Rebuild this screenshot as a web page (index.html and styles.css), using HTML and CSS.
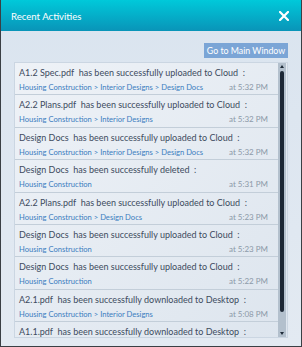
FILE: index.html
```html
<!DOCTYPE html>
<html lang="en">
<head>
    <meta charset="UTF-8">
    <title>Recent Activities</title>
    <link rel="stylesheet" href="styles.css">
</head>
<body>
    <div class="window">
        <div class="header">
            <span class="title">Recent Activities</span>
            <svg class="close" width="10" height="10" viewBox="0 0 10 10">
                <path d="M1 1 L9 9 M9 1 L1 9" stroke="#fff" stroke-width="2.2" stroke-linecap="square"/>
            </svg>
        </div>
        <div class="content">
            <div class="toolbar">
                <button class="main-btn">Go to Main Window</button>
            </div>
            <div class="list-box">
                <div class="list">
                    <div class="item">
                        <div class="msg">A1.2 Spec.pdf&nbsp; has been successfully uploaded to Cloud &nbsp;:</div>
                        <div class="meta"><span class="path">Housing Construction &gt; Interior Designs &gt; Design Docs</span><span class="time">at 5:32 PM</span></div>
                    </div>
                    <div class="item">
                        <div class="msg">A2.2 Plans.pdf&nbsp; has been successfully uploaded to Cloud &nbsp;:</div>
                        <div class="meta"><span class="path">Housing Construction &gt; Interior Designs</span><span class="time">at 5:32 PM</span></div>
                    </div>
                    <div class="item">
                        <div class="msg">Design Docs&nbsp; has been successfully uploaded to Cloud &nbsp;:</div>
                        <div class="meta"><span class="path">Housing Construction &gt; Interior Designs &gt; Design Docs</span><span class="time">at 5:32 PM</span></div>
                    </div>
                    <div class="item">
                        <div class="msg">Design Docs&nbsp; has been successfully deleted &nbsp;:</div>
                        <div class="meta"><span class="path">Housing Construction</span><span class="time">at 5:31 PM</span></div>
                    </div>
                    <div class="item">
                        <div class="msg">A2.2 Plans.pdf&nbsp; has been successfully uploaded to Cloud &nbsp;:</div>
                        <div class="meta"><span class="path">Housing Construction &gt; Design Docs</span><span class="time">at 5:23 PM</span></div>
                    </div>
                    <div class="item">
                        <div class="msg">Design Docs&nbsp; has been successfully uploaded to Cloud &nbsp;:</div>
                        <div class="meta"><span class="path">Housing Construction</span><span class="time">at 5:23 PM</span></div>
                    </div>
                    <div class="item">
                        <div class="msg">Design Docs&nbsp; has been successfully uploaded to Cloud &nbsp;:</div>
                        <div class="meta"><span class="path">Housing Construction</span><span class="time">at 5:22 PM</span></div>
                    </div>
                    <div class="item">
                        <div class="msg">A2.1.pdf&nbsp; has been successfully downloaded to Desktop &nbsp;:</div>
                        <div class="meta"><span class="path">Housing Construction &gt; Interior Designs</span><span class="time">at 5:08 PM</span></div>
                    </div>
                    <div class="item">
                        <div class="msg">A1.1.pdf&nbsp; has been successfully downloaded to Desktop &nbsp;:</div>
                        <div class="meta"><span class="path">Housing Construction &gt; Interior Designs</span><span class="time">at 5:08 PM</span></div>
                    </div>
                </div>
                <div class="scrollbar">
                    <svg class="arrow" width="8" height="7" viewBox="0 0 8 7"><path d="M2 5 L4 2 L6 5 Z" fill="#1e2a38"/></svg>
                    <div class="thumb"></div>
                    <svg class="arrow" width="8" height="7" viewBox="0 0 8 7"><path d="M2 2 L6 2 L4 5 Z" fill="#1e2a38"/></svg>
                </div>
            </div>
        </div>
    </div>
</body>
</html>
```

FILE: styles.css
```css
body {
    margin: 0;
    font-family: Lato, 'Open Sans', sans-serif;
}
.window {
    width: 302px;
    height: 347px;
    box-sizing: border-box;
    border: 1px solid #3a3f44;
    border-top: none;
    background: linear-gradient(to bottom, #dae4ef, #e3eaf2);
    display: flex;
    flex-direction: column;
}
.header {
    height: 30px;
    flex-shrink: 0;
    background: linear-gradient(to bottom, #00c9da, #0994b8);
    display: flex;
    align-items: center;
    justify-content: space-between;
    padding: 1px 12px 0 10px;
}
.title {
    color: #fff;
    font-size: 9.6px;
}
.close {
    display: block;
}
.content {
    flex: 1;
    display: flex;
    flex-direction: column;
    padding: 12px 13px 0 13px;
    min-height: 0;
}
.toolbar {
    display: flex;
    justify-content: flex-end;
    margin-bottom: 4px;
}
.main-btn {
    background: #7ba5d6;
    color: #fff;
    border: none;
    font-family: inherit;
    font-size: 8.8px;
    height: 15px;
    width: 84px;
    padding: 0;
    line-height: 15px;
}
.list-box {
    height: 274px;
    flex-shrink: 0;
    display: flex;
    border: 1px solid #cbd6e2;
    background: linear-gradient(to bottom right, #eef2f7, #dde5ee);
    overflow: hidden;
}
.list {
    flex: 1;
    min-width: 0;
    overflow: hidden;
}
.item {
    padding: 2px 10px 0 4px;
    height: 29.4px;
    border-bottom: 1px solid #c3ced9;
}
.msg {
    color: #3d4b5e;
    font-size: 9px;
    line-height: 16px;
    white-space: nowrap;
}
.meta {
    display: flex;
    justify-content: space-between;
    align-items: baseline;
    line-height: 13px;
    white-space: nowrap;
}
.path {
    color: #3b7dc0;
    font-size: 7.6px;
}
.time {
    color: #8c99a8;
    font-size: 8px;
}
.scrollbar {
    width: 8px;
    flex-shrink: 0;
    background: #b3c0cd;
    display: flex;
    flex-direction: column;
    align-items: center;
    margin-right: 1px;
}
.arrow {
    display: block;
    flex-shrink: 0;
}
.thumb {
    width: 4px;
    flex: 1;
    margin: 1px 0 18px;
    background: #1c2735;
    border-radius: 2px;
}
```
